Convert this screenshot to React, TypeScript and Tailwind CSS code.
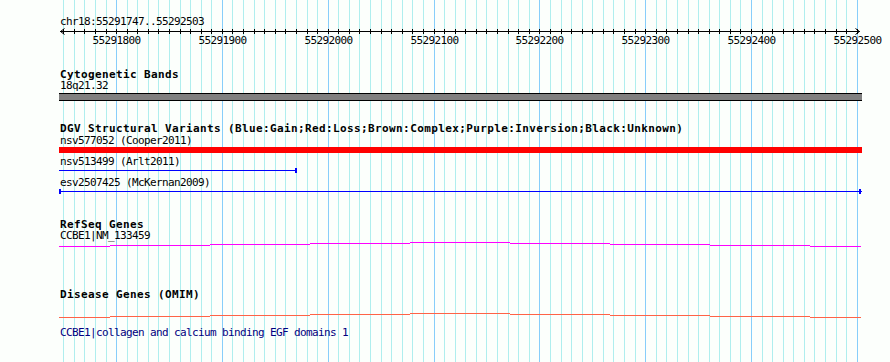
import React from "react";

const START = 55291747;
const PX = 800 / 756;
const X0 = 60;
const xOf = (bp: number) => X0 + (bp - START) * PX;

const ticks: { x: number; major: boolean; bp: number }[] = [];
for (let bp = 55291750; bp <= 55292500; bp += 10) {
  ticks.push({ x: Math.round(xOf(bp)), major: bp % 100 === 0, bp });
}

const steps = [59, 110, 210, 310, 410, 510, 610, 710, 810, 861];
const magentaY = [5, 4, 3, 2, 1, 2, 3, 4, 5];
const orangeY = [17, 16, 15, 14, 13, 14, 15, 16, 17];

const monoBase = "pl-[60px] font-['DejaVu_Sans_Mono',monospace] text-[11px] leading-[10px] tracking-[-0.62px] whitespace-pre";
const mono = "h-[12px] pt-[2px] " + monoBase;
const monoAfterTitle = "h-[11px] pt-[1px] " + monoBase;
const title =
  "h-[13px] pt-[3px] pl-[60px] font-['DejaVu_Sans_Mono',monospace] text-[11px] leading-[10px] tracking-[0.38px] font-bold text-black whitespace-pre";

export default function App() {
  return (
    <div className="relative w-[890px] h-[362px] overflow-hidden bg-[#fcfffc]">
      <svg className="absolute inset-0" width={890} height={362} shapeRendering="crispEdges">
        {ticks.map((t) => (
          <rect key={t.bp} x={t.x} y={0} width={1} height={362} fill={t.major ? "#87cefa" : "#afeeee"} />
        ))}
      </svg>
      <div className="relative flex flex-col pt-[15px]">
        <div className={mono + " text-black"}>chr18:55291747..55292503</div>
        <div className="h-[1px]" />
        <svg width={890} height={20} className="block">
          <g shapeRendering="crispEdges">
            <rect x={60} y={3} width={800} height={1} fill="#000" />
            {ticks.map((t) => (
              <rect key={t.bp} x={t.x} y={1} width={1} height={5} fill="#000" />
            ))}
          </g>
          <path d="M64.5 0.5 L60.5 3.5 L64.5 6.5 M855.5 0.5 L859.5 3.5 L855.5 6.5" stroke="#000" strokeWidth={1} fill="none" />
          {ticks
            .filter((t) => t.major)
            .map((t) => (
              <text
                key={t.bp}
                x={t.x + 0.5}
                y={16}
                textAnchor="middle"
                fontFamily="DejaVu Sans Mono, monospace"
                fontSize={11}
                letterSpacing={-0.62}
                fill="#000"
              >
                {t.bp}
              </text>
            ))}
        </svg>
        <div className="h-[19px]" />
        <div className={title}>Cytogenetic Bands</div>
        <div className={monoAfterTitle + " text-black"}>18q21.32</div>
        <div className="h-[2px]" />
        <svg width={890} height={8} className="block" shapeRendering="crispEdges">
          <rect x={59} y={0} width={803} height={8} fill="#000" />
          <rect x={59} y={1} width={803} height={6} fill="#808080" />
        </svg>
        <div className="h-[20px]" />
        <div className={title}>DGV Structural Variants (Blue:Gain;Red:Loss;Brown:Complex;Purple:Inversion;Black:Unknown)</div>
        <div className={mono + " text-black"}>nsv577052 (Cooper2011)</div>
        <div className="h-[1px]" />
        <svg width={890} height={6} className="block" shapeRendering="crispEdges">
          <rect x={59} y={0} width={803} height={6} fill="#ff0000" />
        </svg>
        <div className="h-[2px]" />
        <div className={mono + " text-black"}>nsv513499 (Arlt2011)</div>
        <svg width={890} height={9} className="block" shapeRendering="crispEdges">
          <rect x={59} y={3} width={237} height={1} fill="#0000ff" />
          <rect x={295} y={1} width={2} height={5} fill="#0000ff" />
        </svg>
        <div className={mono + " text-black"}>esv2507425 (McKernan2009)</div>
        <svg width={890} height={8} className="block" shapeRendering="crispEdges">
          <rect x={59} y={3} width={803} height={1} fill="#0000ff" />
          <rect x={59} y={1} width={2} height={5} fill="#0000ff" />
          <rect x={859} y={1} width={2} height={5} fill="#0000ff" />
        </svg>
        <div className="h-[21px]" />
        <div className={title}>RefSeq Genes</div>
        <div className={monoAfterTitle + " text-black"}>CCBE1|NM_133459</div>
        <svg width={890} height={7} className="block" shapeRendering="crispEdges">
          {magentaY.map((y, i) => (
            <rect key={i} x={steps[i]} y={y} width={steps[i + 1] - steps[i]} height={1} fill="#ff00ff" />
          ))}
        </svg>
        <div className="h-[39px]" />
        <div className={title}>Disease Genes (OMIM)</div>
        <svg width={890} height={26} className="block" shapeRendering="crispEdges">
          {orangeY.map((y, i) => (
            <rect key={i} x={steps[i]} y={y} width={steps[i + 1] - steps[i]} height={1} fill="#ff6347" />
          ))}
        </svg>
        <div className={mono + " text-[#000080]"}>CCBE1|collagen and calcium binding EGF domains 1</div>
      </div>
    </div>
  );
}
